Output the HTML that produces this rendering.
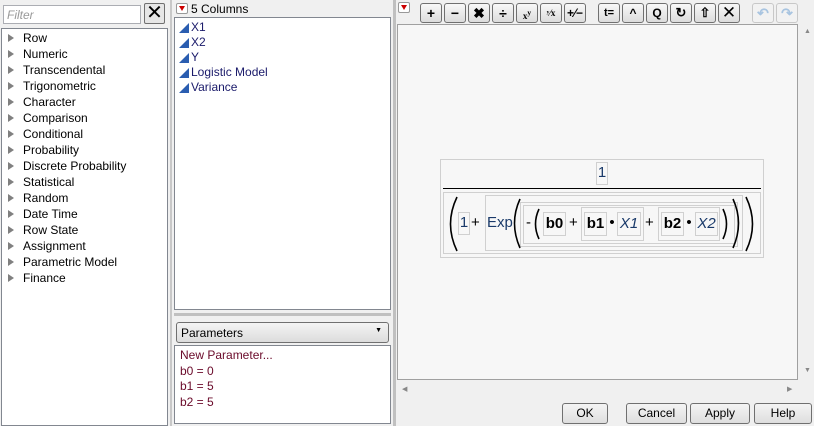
<!DOCTYPE html>
<html><head><style>
*{box-sizing:border-box;margin:0;padding:0}
body{width:814px;height:426px;background:#f0f0f0;font-family:"Liberation Sans",sans-serif;font-size:12px;color:#000;position:relative;overflow:hidden}
.a{position:absolute}
.box{position:absolute;background:#fff;border:1px solid #828790}
.li{position:absolute;left:6px;height:16px;line-height:16px}
.li:before{content:"";position:absolute;left:0;top:4px;border-left:6px solid #808080;border-top:4px solid transparent;border-bottom:4px solid transparent}
.li span{position:absolute;left:15px;white-space:nowrap}
.col{position:absolute;left:3px;height:15px;line-height:15px;white-space:nowrap;padding-left:13px;color:#1a1a6a}
.col:before{content:"";position:absolute;left:1px;top:3px;border-right:10px solid #2a5db0;border-top:10px solid transparent}
.tb{position:absolute;top:3px;width:22px;height:20px;border:1px solid #707070;border-radius:3px;background:linear-gradient(#f8f8f8,#dcdcdc);font-weight:bold;text-align:center;line-height:18px;font-size:14px}
.btn{position:absolute;top:403px;height:21px;border:1px solid #707070;border-radius:3px;background:linear-gradient(#f4f4f4,#dedede);text-align:center;line-height:19px}
.red{position:absolute;width:12px;height:11px;border:1px solid #999;background:#fff;border-radius:2px}
.red:after{content:"";position:absolute;left:2px;top:2px;border-top:5px solid #c00;border-left:3px solid transparent;border-right:3px solid transparent}
.fb{position:absolute;border:1px solid #d0d0d0}
.ft{position:absolute;font-size:15px;line-height:20px;text-align:center;white-space:nowrap}
</style></head><body>
<div class="box" style="left:3px;top:5px;width:138px;height:19px;border-color:#abadb3"><span style="color:#999;font-style:italic;position:absolute;left:3px;top:2px">Filter</span></div>
<div class="a" style="left:144px;top:3px;width:21px;height:21px;border:1px solid #707070;border-radius:2px;background:#e6e6e6;text-align:center;line-height:19px;font-size:20px">✕</div>
<div class="box" style="left:1px;top:28px;width:167px;height:398px">
<div class="li" style="top:1px"><span>Row</span></div>
<div class="li" style="top:17px"><span>Numeric</span></div>
<div class="li" style="top:33px"><span>Transcendental</span></div>
<div class="li" style="top:49px"><span>Trigonometric</span></div>
<div class="li" style="top:65px"><span>Character</span></div>
<div class="li" style="top:81px"><span>Comparison</span></div>
<div class="li" style="top:97px"><span>Conditional</span></div>
<div class="li" style="top:113px"><span>Probability</span></div>
<div class="li" style="top:129px"><span>Discrete Probability</span></div>
<div class="li" style="top:145px"><span>Statistical</span></div>
<div class="li" style="top:161px"><span>Random</span></div>
<div class="li" style="top:177px"><span>Date Time</span></div>
<div class="li" style="top:193px"><span>Row State</span></div>
<div class="li" style="top:209px"><span>Assignment</span></div>
<div class="li" style="top:225px"><span>Parametric Model</span></div>
<div class="li" style="top:241px"><span>Finance</span></div>
</div>
<div class="a" style="left:170px;top:0;width:2px;height:426px;background:#c8c8c8"></div>
<div class="red" style="left:176px;top:3px"></div>
<div class="a" style="left:191px;top:2px">5 Columns</div>
<div class="box" style="left:174px;top:17px;width:217px;height:293px">
<div class="col" style="top:2px">X1</div>
<div class="col" style="top:17px">X2</div>
<div class="col" style="top:32px">Y</div>
<div class="col" style="top:47px">Logistic Model</div>
<div class="col" style="top:62px">Variance</div>
</div>
<div class="a" style="left:174px;top:313px;width:217px;height:3px;background:#c0c0c0"></div>
<div class="a" style="left:176px;top:322px;width:213px;height:21px;border:1px solid #707070;border-radius:3px;background:linear-gradient(#f4f4f4,#dcdcdc);padding:3px 4px">Parameters<span style="position:absolute;right:6px;top:4px;font-size:7px">▼</span></div>
<div class="box" style="left:174px;top:345px;width:217px;height:79px;color:#6a0a2a;padding:2px 5px;line-height:15.5px">New Parameter...<br>b0 = 0<br>b1 = 5<br>b2 = 5</div>
<div class="a" style="left:393px;top:0;width:3px;height:426px;background:#c0c0c0"></div>
<div class="red" style="left:398px;top:2px"></div>
<div class="tb" style="left:420px">+</div>
<div class="tb" style="left:444px">−</div>
<div class="tb" style="left:468px">✖</div>
<div class="tb" style="left:492px">÷</div>
<div class="tb" style="left:516px;font-size:9px;font-family:'Liberation Serif',serif">x<sup>y</sup></div>
<div class="tb" style="left:540px;font-size:9px;font-family:'Liberation Serif',serif">ʸ⁄x</div>
<div class="tb" style="left:564px;font-size:12px">+⁄−</div>
<div class="tb" style="left:598px;font-size:11px">t=</div>
<div class="tb" style="left:622px;font-size:12px">^</div>
<div class="tb" style="left:646px;font-size:12px">Q</div>
<div class="tb" style="left:670px;font-size:13px">↻</div>
<div class="tb" style="left:694px;font-size:13px">⇧</div>
<div class="tb" style="left:718px;font-weight:normal;font-size:17px">✕</div>
<div class="tb" style="left:752px;color:#a8c4e0;border-color:#c8c8c8;background:#f2f2f2">↶</div>
<div class="tb" style="left:776px;color:#a8c4e0;border-color:#c8c8c8;background:#f2f2f2">↷</div>
<div class="a" style="left:397px;top:24px;width:401px;height:356px;background:#f7f7f7;border:1px solid #a0a0a0"></div>
<div class="a" style="left:804px;top:28px;font-size:7px;color:#888">▲</div>
<div class="a" style="left:804px;top:367px;font-size:7px;color:#888">▼</div>
<div class="a" style="left:402px;top:385px;font-size:7px;color:#888">◀</div>
<div class="a" style="left:787px;top:385px;font-size:7px;color:#888">▶</div>

<div class="fb" style="left:440px;top:159px;width:324px;height:99px"></div>
<div class="fb" style="left:596px;top:162px;width:12px;height:23px"></div>
<div class="ft" style="left:596px;top:163px;width:12px;color:#1a3a6a">1</div>
<div class="a" style="left:443px;top:188px;width:318px;height:1px;background:#000"></div>
<div class="fb" style="left:443px;top:192px;width:318px;height:62px"></div>
<div class="fb" style="left:458px;top:212px;width:12px;height:23px"></div>
<div class="ft" style="left:458px;top:213px;width:12px;color:#1a3a6a">1</div>
<div class="ft" style="left:471px;top:213px">+</div>
<div class="fb" style="left:485px;top:195px;width:258px;height:56px"></div>
<div class="ft" style="left:487px;top:213px;color:#1a3a6a">Exp</div>
<div class="fb" style="left:520px;top:202px;width:218px;height:45px"></div>
<div class="fb" style="left:523px;top:205px;width:212px;height:39px"></div>
<div class="ft" style="left:526px;top:213px">-</div>
<div class="fb" style="left:543px;top:212px;width:23px;height:24px"></div>
<div class="ft" style="left:543px;top:214px;width:23px;font-weight:bold">b0</div>
<div class="ft" style="left:569px;top:213px">+</div>
<div class="fb" style="left:581px;top:207px;width:63px;height:34px"></div>
<div class="fb" style="left:584px;top:212px;width:23px;height:24px"></div>
<div class="ft" style="left:584px;top:214px;width:23px;font-weight:bold">b1</div>
<div class="ft" style="left:607px;top:213px;width:10px">•</div>
<div class="fb" style="left:617px;top:212px;width:24px;height:24px"></div>
<div class="ft" style="left:617px;top:214px;width:24px;font-style:italic;color:#1a3a6a">X1</div>
<div class="ft" style="left:645px;top:213px">+</div>
<div class="fb" style="left:658px;top:207px;width:62px;height:34px"></div>
<div class="fb" style="left:661px;top:212px;width:23px;height:24px"></div>
<div class="ft" style="left:661px;top:214px;width:23px;font-weight:bold">b2</div>
<div class="ft" style="left:684px;top:213px;width:10px">•</div>
<div class="fb" style="left:695px;top:212px;width:23px;height:24px"></div>
<div class="ft" style="left:695px;top:214px;width:23px;font-style:italic;color:#1a3a6a">X2</div>
<svg class="a" style="left:0;top:0" width="814" height="426" fill="none" stroke="#000" stroke-width="1.6">
<path d="M457,197 Q444,224 457,251"/>
<path d="M520,199 Q509,223 520,248"/>
<path d="M539,209 Q532,224 539,239"/>
<path d="M723,209 Q730,224 723,239"/>
<path d="M733,199 Q744,223 733,248"/>
<path d="M746,197 Q759,224 746,251"/>
</svg>

<div class="btn" style="left:562px;width:46px">OK</div>
<div class="btn" style="left:626px;width:61px">Cancel</div>
<div class="btn" style="left:690px;width:60px">Apply</div>
<div class="btn" style="left:754px;width:58px">Help</div>
</body></html>
